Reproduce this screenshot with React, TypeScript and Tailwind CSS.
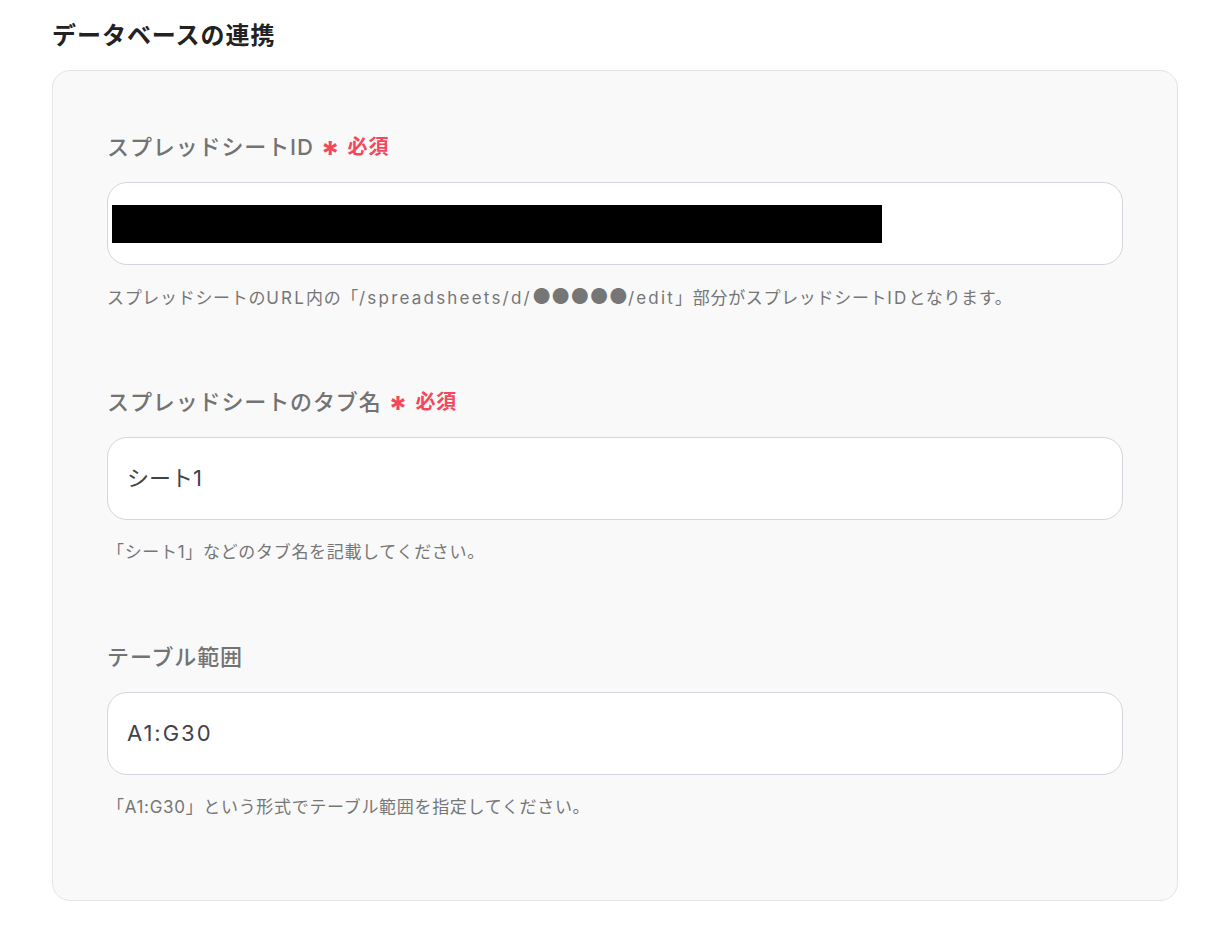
import React from "react";

const font = { fontFamily: 'Inter, "Noto Sans CJK JP", sans-serif' };

function Required() {
  return (
    <span className="ml-[7px] inline-flex items-center text-[20px] font-bold text-[#f4475b]">
      <span className="mr-[7px] text-[34px] leading-none translate-y-[7px]">*</span>
      <span>必須</span>
    </span>
  );
}

function Field({
  label,
  required,
  children,
  help,
  first,
}: {
  label: string;
  required?: boolean;
  children: React.ReactNode;
  help: React.ReactNode;
  first?: boolean;
}) {
  return (
    <div className={first ? "" : "mt-[78px]"}>
      <div className="flex items-center h-[30px] text-[22px] font-medium tracking-[0.04em] text-[#737373]">
        <span>{label}</span>
        {required && <Required />}
      </div>
      <div className="mt-[20px] h-[83px] rounded-[20px] border border-[#d3d6dc] bg-white flex items-center">
        {children}
      </div>
      <div className="mt-[20px] h-[24px] leading-[24px] text-[17px] tracking-[0.04em] text-[#767676] whitespace-nowrap">
        {help}
      </div>
    </div>
  );
}

function L({ children }: { children: React.ReactNode }) {
  return <span className="tracking-[0.13em]">{children}</span>;
}

export default function App() {
  return (
    <div className="min-h-screen bg-white pl-[52px] pt-[20px]" style={font}>
      <h2 className="text-[24px] leading-[32px] font-semibold tracking-[0.04em] text-[#222222]">データベースの連携</h2>
      <div className="mt-[18px] w-[1126px] rounded-[18px] border border-[#e4e4e4] bg-[#f9f9f9] px-[54px] pt-[61px] pb-[81px]">
        <Field
          first
          label="スプレッドシートID"
          required
          help={
            <>
              スプレッドシートの<L>URL</L>内の「<L>/spreadsheets/d/</L>
              <span className="text-[21px] tracking-normal">●●●●●</span>
              <L>/edit</L>」部分がスプレッドシート<L>ID</L>となります。
            </>
          }
        >
          <div className="ml-[4px] h-[38px] w-[770px] bg-black" />
        </Field>
        <Field
          label="スプレッドシートのタブ名"
          required
          help="「シート1」などのタブ名を記載してください。"
        >
          <span className="pl-[19px] text-[22px] text-[#3f434a]">シート1</span>
        </Field>
        <Field label="テーブル範囲" help="「A1:G30」という形式でテーブル範囲を指定してください。">
          <span className="pl-[19px] text-[22px] tracking-[0.09em] text-[#3f434a]">A1:G30</span>
        </Field>
      </div>
    </div>
  );
}
